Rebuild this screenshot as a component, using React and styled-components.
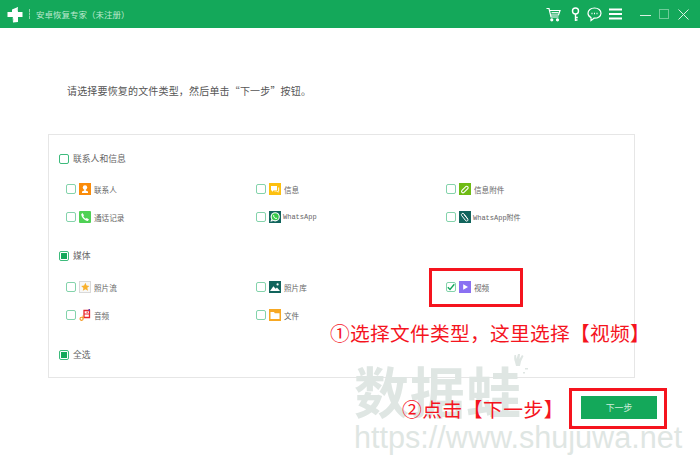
import styled, { createGlobalStyle } from "styled-components";

const GlobalStyle = createGlobalStyle`
  html, body { margin: 0; padding: 0; background: #fff; }
  body { font-family: "Noto Sans CJK SC", "Liberation Sans", sans-serif; }
`;

const sections = [
  {
    title: "联系人和信息",
    state: "empty",
    top: 8,
    after: 16,
    items: [
      { label: "联系人", icon: "contact" },
      { label: "信息", icon: "message" },
      { label: "信息附件", icon: "attach" },
      { label: "通话记录", icon: "phone" },
      { label: "WhatsApp", icon: "whatsapp", latin: true },
      { label: "WhatsApp附件", icon: "whatsattach", latin: true },
    ],
  },
  {
    title: "媒体",
    state: "partial",
    top: 9,
    after: 17,
    items: [
      { label: "照片流", icon: "star" },
      { label: "照片库", icon: "gallery" },
      { label: "视频", icon: "video", checked: true },
      { label: "音频", icon: "audio" },
      { label: "文件", icon: "folder" },
    ],
  },
];

function ItemIcon({ name }) {
  switch (name) {
    case "contact":
      return (
        <svg width="12" height="12" viewBox="0 0 12 12">
          <rect width="12" height="12" fill="#fb8c0a" />
          <circle cx="6" cy="4.4" r="2.2" fill="#fff" />
          <path d="M5.2 6h1.6v1.4L9 8.6V10H3V8.6l2.2-1.2z" fill="#fff" />
        </svg>
      );
    case "message":
      return (
        <svg width="12" height="12" viewBox="0 0 12 12">
          <rect width="12" height="12" fill="#fdc00f" />
          <path d="M2 3h6v4.6H4.4L3 9V7.6H2z" fill="#fff" />
          <path d="M9 4.6h1.2v4h-.8V10L8 8.600H5.400V8H9z" fill="#fff" opacity=".8" />
        </svg>
      );
    case "attach":
      return (
        <svg width="12" height="12" viewBox="0 0 12 12">
          <rect width="12" height="12" fill="#6fbb14" />
          <path d="M3 7.400 7 3.400a1.500 1.500 0 0 1 2 2L5 9.400a1.400 1.400 0 0 1-2-2" fill="none" stroke="#fff" strokeWidth="1.100" />
        </svg>
      );
    case "phone":
      return (
        <svg width="12" height="12" viewBox="0 0 12 12">
          <rect width="12" height="12" rx="1" fill="#4fd155" />
          <path d="M3.400 2 5 4.200 4.300 5.300c.5 1 1.300 1.900 2.400 2.400l1.100-.7L10 8.600 8.800 10C5.600 9.600 2.600 6.600 2.200 3.200z" fill="#fff" />
        </svg>
      );
    case "whatsapp":
      return (
        <svg width="12" height="12" viewBox="0 0 12 12">
          <rect width="12" height="12" fill="#11645c" />
          <circle cx="6.200" cy="5.800" r="4.600" fill="#fff" />
          <path d="M1.400 10.800l.9-2.800 1.900 1.900z" fill="#fff" />
          <circle cx="6.200" cy="5.800" r="3.500" fill="#35c948" />
          <path d="M4.800 3.900 5.500 5l-.4.6c.3.6.8 1 1.400 1.300l.6-.4 1 .7-.6.9C6 8 4.200 6.200 4 4.500z" fill="#fff" />
        </svg>
      );
    case "whatsattach":
      return (
        <svg width="12" height="12" viewBox="0 0 12 12">
          <rect width="12" height="12" fill="#11645c" />
          <path d="M8.800 8 4.800 2.800A1.400 1.400 0 0 0 2.600 4.500L6.800 9.800a1.300 1.300 0 0 0 2-1.600L5.300 3.900" fill="none" stroke="#fff" strokeWidth="1" />
        </svg>
      );
    case "star":
      return (
        <svg width="12" height="12" viewBox="0 0 12 12">
          <rect x=".5" y=".5" width="11" height="11" fill="#f7f7f7" stroke="#d9d9d9" />
          <path d="M6.400 1.800 7.600 4.600l2.800.3-2.100 1.900.7 2.900-2.600-1.500L3.800 9.800l.6-2.900L2.200 5l2.900-.4z" fill="#f8b02c" />
        </svg>
      );
    case "gallery":
      return (
        <svg width="12" height="12" viewBox="0 0 12 12">
          <rect width="12" height="12" fill="#11645c" />
          <circle cx="8.600" cy="3.400" r="1.100" fill="#fff" />
          <path d="M1 10 4.400 5.200 6.600 7.800 8 6.600 11 10z" fill="#fff" />
        </svg>
      );
    case "video":
      return (
        <svg width="12" height="12" viewBox="0 0 12 12">
          <rect width="12" height="12" fill="#8a70f2" />
          <path d="M4.200 3.200 9 6 4.200 8.800z" fill="#fff" />
        </svg>
      );
    case "audio":
      return (
        <svg width="12" height="12" viewBox="0 0 12 12">
          <path d="M5 1.500h5.500v7H5z" fill="none" stroke="#e8262c" strokeWidth="1.300" />
          <path d="M5 5h5.500M7.500 3.200h1.500" stroke="#e8262c" strokeWidth="1" />
          <path d="M9.500 0H11v2H9.500z" fill="#6a3fa8" />
          <circle cx="2.600" cy="9.800" r="1.600" fill="none" stroke="#f59a23" strokeWidth="1.100" />
          <path d="M4 9.500V6.500" stroke="#f59a23" strokeWidth="1" />
        </svg>
      );
    case "folder":
      return (
        <svg width="12" height="12" viewBox="0 0 12 12">
          <rect width="12" height="12" fill="#f7a823" />
          <path d="M1.500 3H5l.8 1.200h4.700V10h-9z" fill="#fff" />
        </svg>
      );
    default:
      return null;
  }
}

export default function App() {
  return (
    <Page>
      <GlobalStyle />
      <TitleBar>
        <LogoArea>
          <svg width="16" height="17" viewBox="0 0 16 17">
            <path d="M5 3.500 11 1v5h4.500v5H11v5L6 16.500V11H.5V6H5z" fill="#fff" />
            <path d="M11 1 9.500 3.500 11 6zM5.500 11 7 13.500l-1 3z" fill="#c6ead6" />
          </svg>
          <Divider />
          <AppTitle>安卓恢复专家（未注册）</AppTitle>
        </LogoArea>
        <Tools>
          <ToolIcons>
            <svg width="15" height="15" viewBox="0 0 15 15" fill="none" stroke="#fff" strokeWidth="1.200">
              <path d="M.5 1.500H3l2 8.500h7.500" />
              <path d="M3.500 3.500H14L12.500 8H5" />
              <path d="M5.500 5.700h7" />
              <circle cx="5.800" cy="12.800" r="1" fill="#fff" />
              <circle cx="11.500" cy="12.800" r="1" fill="#fff" />
            </svg>
            <svg width="9" height="15" viewBox="0 0 9 15" fill="none" stroke="#fff" strokeWidth="1.400">
              <circle cx="4.500" cy="4" r="3" />
              <path d="M4.500 7v7M4.500 10.500h2.300M4.500 13h2" />
            </svg>
            <svg width="15" height="15" viewBox="0 0 15 15" fill="none" stroke="#fff" strokeWidth="1.200">
              <path d="M7.500 1C3.700 1 1 3.300 1 6.300c0 2 1.200 3.500 3 4.300v3l3-2.400c4 .2 7-2 7-4.900C14 3.300 11.300 1 7.500 1z" />
              <path d="M4.500 6.500h1M7 6.500h1M9.500 6.500h1" strokeWidth="1.300" />
            </svg>
            <svg width="13" height="12" viewBox="0 0 13 12" fill="#fff">
              <rect width="13" height="2" y="0.500" />
              <rect width="13" height="2" y="5" />
              <rect width="13" height="2" y="9.500" />
            </svg>
          </ToolIcons>
          <WindowIcons>
            <svg width="11" height="11" viewBox="0 0 11 11">
              <path d="M0 6.500h11" stroke="#d9f1e3" strokeWidth="1" />
            </svg>
            <svg width="11" height="11" viewBox="0 0 11 11">
              <rect x=".5" y=".5" width="9" height="9" fill="none" stroke="#6fcb99" />
            </svg>
            <svg width="11" height="11" viewBox="0 0 11 11">
              <path d="M.5.500l10 10M10.500.500l-10 10" stroke="#d9f1e3" strokeWidth="1" />
            </svg>
          </WindowIcons>
        </Tools>
      </TitleBar>

      <Prompt>请选择要恢复的文件类型，然后单击“下一步”按钮。</Prompt>

      <Panel>
        {sections.map((section) => (
          <Section key={section.title} $after={section.after}>
            <Heading>
              <Check $state={section.state} />
              <HeadingLabel>{section.title}</HeadingLabel>
            </Heading>
            <ItemGrid $top={section.top}>
              {section.items.map((item) => (
                <Item key={item.label}>
                  <SubCheck>
                    {item.checked && (
                      <svg width="8" height="8" viewBox="0 0 8 8">
                        <path d="M.8 4.200 3 6.400 7.300 1.200" fill="none" stroke="#14a85a" strokeWidth="1.400" />
                      </svg>
                    )}
                  </SubCheck>
                  <ItemIcon name={item.icon} />
                  <ItemLabel $latin={item.latin}>{item.label}</ItemLabel>
                </Item>
              ))}
            </ItemGrid>
          </Section>
        ))}
        <Heading>
          <Check $state="partial" />
          <HeadingLabel>全选</HeadingLabel>
        </Heading>
      </Panel>

      <Footer>
        <NextButton>下一步</NextButton>
      </Footer>

      <Watermark>
        <WatermarkName>
          数据蛙
          <WatermarkPaw width="16" height="20" viewBox="0 0 16 20" fill="#dfe6e3">
            <path d="M3 8c-1-2-1-5-.5-7L4 1l.5 4L6 0h2l-.5 5L10 1l1.500 1L9 7.500 8 12H4z" />
            <path d="M13 14h3v1.500h-3zM11 18h2v1.500h-2z" />
          </WatermarkPaw>
        </WatermarkName>
        <WatermarkUrl>https://www.shujuwa.net</WatermarkUrl>
      </Watermark>
      <VideoMark />
      <ButtonMark />
      <NoteOne>①选择文件类型，这里选择【视频】</NoteOne>
      <NoteTwo>②点击【下一步】</NoteTwo>
    </Page>
  );
}

const Page = styled.div`
  position: relative;
  width: 700px;
  height: 466px;
  overflow: hidden;
  background: #fff;
`;

const TitleBar = styled.header`
  display: flex;
  align-items: center;
  justify-content: space-between;
  height: 28px;
  padding: 0 11px 0 7px;
  box-sizing: border-box;
  background: #14a85a;
`;

const LogoArea = styled.div`
  display: flex;
  align-items: center;
`;

const Divider = styled.span`
  width: 0;
  height: 10px;
  margin: 0 6px;
  border-left: 1px dashed #8fd6ae;
`;

const AppTitle = styled.span`
  font-size: 8.5px;
  line-height: 12px;
  color: #bfe8d0;
`;

const Tools = styled.div`
  display: flex;
  align-items: center;
  gap: 18px;
`;

const ToolIcons = styled.div`
  display: flex;
  align-items: center;
  gap: 7px;

  svg:first-child {
    margin-right: 3px;
  }
`;

const WindowIcons = styled.div`
  display: flex;
  align-items: center;
  gap: 8px;
`;

const Prompt = styled.p`
  margin: 56px 0 36px 67px;
  font-size: 10px;
  line-height: 14px;
  letter-spacing: 0.17px;
  color: #555;
`;

const Panel = styled.section`
  box-sizing: border-box;
  width: 587px;
  height: 244px;
  margin-left: 48px;
  padding: 15px 10px;
  border: 1px solid #e6e6e6;
`;

const Section = styled.div`
  margin-bottom: ${(p) => p.$after}px;
`;

const Heading = styled.div`
  display: flex;
  align-items: center;
  height: 17px;
`;

const HeadingLabel = styled.span`
  margin-left: 4px;
  font-size: 8.8px;
  color: #666;
`;

const Check = styled.span`
  display: flex;
  align-items: center;
  justify-content: center;
  box-sizing: border-box;
  width: 10px;
  height: 10px;
  border: 1px solid #3dbb7c;
  border-radius: 2px;

  &::after {
    content: "";
    display: ${(p) => (p.$state === "partial" ? "block" : "none")};
    width: 6px;
    height: 6px;
    background: #14a85a;
  }
`;

const ItemGrid = styled.div`
  display: grid;
  grid-template-columns: repeat(3, 190px);
  grid-auto-rows: 28px;
  margin: ${(p) => p.$top}px 0 0 7px;
`;

const Item = styled.div`
  display: flex;
  align-items: center;
`;

const SubCheck = styled.span`
  display: flex;
  align-items: center;
  justify-content: center;
  box-sizing: border-box;
  width: 10px;
  height: 10px;
  margin-right: 3px;
  border: 1px solid #83d3ab;
  border-radius: 2px;
`;

const ItemLabel = styled.span`
  margin-left: ${(p) => (p.$latin ? "2px" : "3px")};
  font-family: ${(p) => (p.$latin ? '"Liberation Mono", "Noto Sans CJK SC", monospace' : '"Noto Sans CJK SC", sans-serif')};
  font-size: ${(p) => (p.$latin ? "7px" : "7.6px")};
  color: #666;
`;

const Footer = styled.div`
  display: flex;
  justify-content: flex-end;
  margin: 18px 43px 0 0;
`;

const NextButton = styled.button`
  width: 76px;
  height: 23px;
  padding: 0;
  border: 0;
  background: #14a85a;
  font-family: "Noto Sans CJK SC", sans-serif;
  font-size: 8.8px;
  color: #cdeedb;
`;

const Watermark = styled.div`
  position: absolute;
  left: 354px;
  top: 356px;
  color: #dfe6e3;
  pointer-events: none;
`;

const WatermarkName = styled.div`
  position: relative;
  width: max-content;
  font-size: 55px;
  line-height: 66px;
  font-weight: 700;
  letter-spacing: 1px;
`;

const WatermarkPaw = styled.svg`
  position: absolute;
  left: 158px;
  top: -2px;
`;

const WatermarkUrl = styled.div`
  margin-top: -3px;
  font-family: "Liberation Sans", sans-serif;
  font-size: 30.6px;
  line-height: 36px;
  white-space: nowrap;
`;

const VideoMark = styled.div`
  position: absolute;
  left: 429px;
  top: 268px;
  width: 94px;
  height: 39px;
  box-sizing: border-box;
  border: 3px solid #f5141e;
`;

const ButtonMark = styled.div`
  position: absolute;
  left: 569px;
  top: 388px;
  width: 98px;
  height: 41px;
  box-sizing: border-box;
  border: 3px solid #f5141e;
`;

const Note = styled.div`
  position: absolute;
  font-size: 19.75px;
  line-height: 26px;
  color: #f5141e;
  white-space: nowrap;
`;

const NoteOne = styled(Note)`
  left: 330px;
  top: 320px;
  letter-spacing: 0.25px;
`;

const NoteTwo = styled(Note)`
  left: 402px;
  top: 396px;
  letter-spacing: 0.5px;
`;
